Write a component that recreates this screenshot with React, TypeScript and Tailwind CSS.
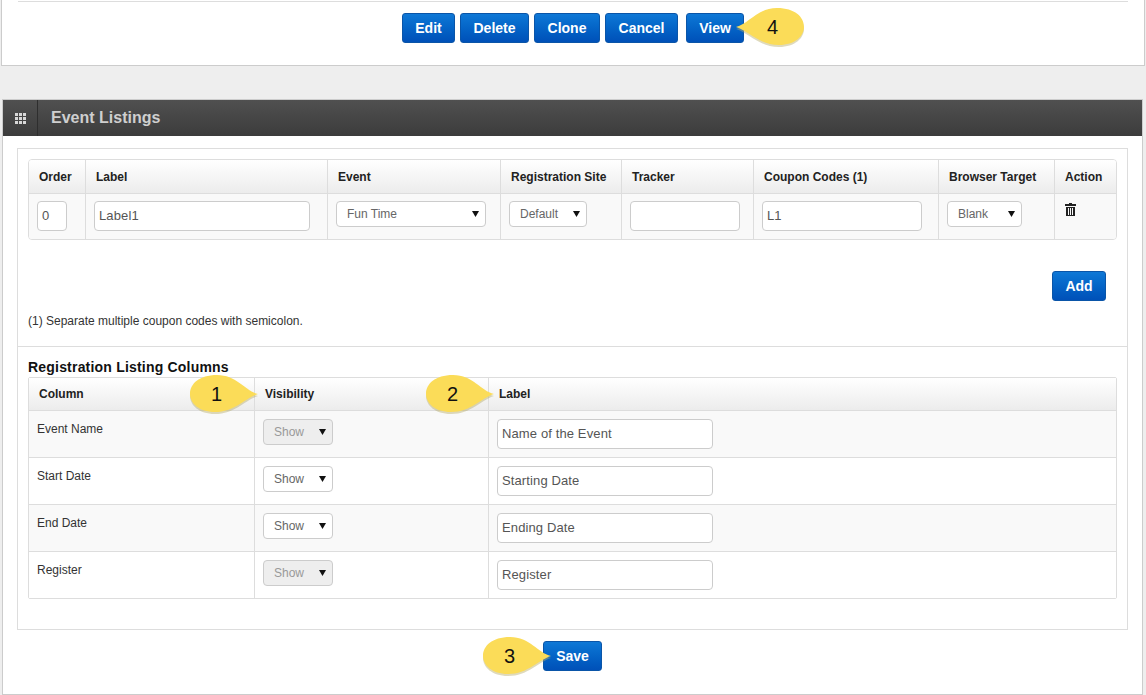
import React from 'react';

const btn =
  'h-[30px] rounded-[3px] border border-[#0a55a8] bg-gradient-to-b from-[#0f78d6] to-[#0050b8] text-[14px] font-bold text-white flex items-center justify-center';

const inputCls =
  'h-[30px] rounded-[4px] border border-[#cccccc] bg-white px-[4px] pb-[2px] text-[13px] tracking-[0.12px] text-[#555555] outline-none';

const thCls =
  'border-l border-[#dddddd] first:border-l-0 bg-gradient-to-b from-white to-[#ececec] px-[10px] text-left font-bold text-[#222222]';

function Select({ value, width, disabled }: { value: string; width: number; disabled?: boolean }) {
  return (
    <div className="relative" style={{ width }}>
      <select
        disabled={disabled}
        defaultValue={value}
        className={`h-[26px] w-full appearance-none rounded-[4px] border border-[#cccccc] pl-[10px] text-[12px] outline-none ${
          disabled ? 'bg-[#eeeeee] text-[#999999]' : 'bg-white text-[#666666]'
        }`}
      >
        <option>{value}</option>
      </select>
      <svg className="pointer-events-none absolute right-[7px] top-[10px]" width="7" height="6" viewBox="0 0 7 6">
        <path d="M0 0h7L3.5 6z" fill="#111111" />
      </svg>
    </div>
  );
}

const bubble = 'M69 20 C56 17 48 1 28 1 C10 1 1 10 1 20 C1 29 10 38 26 38 C46 38 56 24 69 20 Z';

// yellow numbered bubble, tip points left or right
function Callout({ n, dir, className }: { n: number; dir: 'left' | 'right'; className: string }) {
  return (
    <div className={`absolute z-10 h-[41px] w-[70px] ${className}`}>
      <svg width="70" height="41" viewBox="0 0 70 41" className={dir === 'left' ? '-scale-x-100' : ''}>
        <path d={bubble} fill="#b9ad6a" opacity="0.45" transform="translate(0 2)" />
        <path d={bubble} fill="#fbdc58" />
      </svg>
      <span
        className={`absolute top-[7px] text-[20px] leading-[26px] text-[#111111] ${
          dir === 'left' ? 'right-[27px]' : 'left-[22px]'
        }`}
      >
        {n}
      </span>
    </div>
  );
}

const columns = [
  { name: 'Event Name', label: 'Name of the Event', disabled: true },
  { name: 'Start Date', label: 'Starting Date', disabled: false },
  { name: 'End Date', label: 'Ending Date', disabled: false },
  { name: 'Register', label: 'Register', disabled: true },
];

export default function App() {
  return (
    <div className="relative h-[695px] w-[1146px] overflow-hidden bg-[#eeeeee] font-['Liberation_Sans',Arial,sans-serif]">
      {/* Top panel */}
      <div className="mx-[1px] h-[66px] border border-t-0 border-[#cccccc] bg-white">
        <div className="mx-[16px] h-[2px] border-b border-[#dddddd]" />
        <div className="relative mt-[11px] flex pl-[400px]">
          <button className={`${btn} w-[53px]`}>Edit</button>
          <button className={`${btn} ml-[5px] w-[69px]`}>Delete</button>
          <button className={`${btn} ml-[5px] w-[66px]`}>Clone</button>
          <button className={`${btn} ml-[5px] w-[73px]`}>Cancel</button>
          <button className={`${btn} ml-[8px] w-[58px]`}>View</button>
          <Callout n={4} dir="left" className="left-[733px] top-[-6px]" />
        </div>
      </div>

      {/* Event Listings panel */}
      <div className="ml-[2px] mr-[3px] mt-[33px] h-[596px] border border-[#cccccc] bg-white">
        <div className="flex h-[36px] items-center bg-gradient-to-b from-[#505050] to-[#3c3c3c]">
          <div className="flex h-full w-[35px] items-center justify-center border-r border-[#2e2e2e]">
            <svg width="11" height="11" viewBox="0 0 11 11" fill="#d8d8d8">
              <rect x="0" y="0" width="3" height="3" />
              <rect x="4" y="0" width="3" height="3" />
              <rect x="8" y="0" width="3" height="3" />
              <rect x="0" y="4" width="3" height="3" />
              <rect x="4" y="4" width="3" height="3" />
              <rect x="8" y="4" width="3" height="3" />
              <rect x="0" y="8" width="3" height="3" />
              <rect x="4" y="8" width="3" height="3" />
              <rect x="8" y="8" width="3" height="3" />
            </svg>
          </div>
          <h2 className="ml-[13px] text-[16px] font-bold text-[#cfcfcf]">Event Listings</h2>
        </div>

        <div className="mx-[14px] mt-[12px] h-[482px] border border-[#dddddd] bg-white">
          {/* Listings table */}
          <div className="px-[10px] pt-[10px]">
            <table className="w-[1089px] table-fixed border-separate border-spacing-0 overflow-hidden rounded-[4px] border border-[#dddddd] text-[12px]">
              <colgroup>
                <col className="w-[56px]" />
                <col className="w-[242px]" />
                <col className="w-[173px]" />
                <col className="w-[121px]" />
                <col className="w-[132px]" />
                <col className="w-[185px]" />
                <col className="w-[116px]" />
                <col />
              </colgroup>
              <thead>
                <tr className="h-[33px]">
                  <th className={thCls}>Order</th>
                  <th className={thCls}>Label</th>
                  <th className={thCls}>Event</th>
                  <th className={thCls}>Registration Site</th>
                  <th className={thCls}>Tracker</th>
                  <th className={thCls}>Coupon Codes (1)</th>
                  <th className={thCls}>Browser Target</th>
                  <th className={thCls}>Action</th>
                </tr>
              </thead>
              <tbody>
                <tr className="h-[46px] bg-[#f9f9f9] align-top">
                  <td className="border-t border-[#dddddd] pl-[8px] pt-[7px]">
                    <input defaultValue="0" className={`${inputCls} w-[30px]`} />
                  </td>
                  <td className="border-l border-t border-[#dddddd] pl-[8px] pt-[7px]">
                    <input defaultValue="Label1" className={`${inputCls} w-[216px]`} />
                  </td>
                  <td className="border-l border-t border-[#dddddd] pl-[8px] pt-[7px]">
                    <Select value="Fun Time" width={150} />
                  </td>
                  <td className="border-l border-t border-[#dddddd] pl-[8px] pt-[7px]">
                    <Select value="Default" width={78} />
                  </td>
                  <td className="border-l border-t border-[#dddddd] pl-[8px] pt-[7px]">
                    <input className={`${inputCls} w-[110px]`} />
                  </td>
                  <td className="border-l border-t border-[#dddddd] pl-[8px] pt-[7px]">
                    <input defaultValue="L1" className={`${inputCls} w-[160px]`} />
                  </td>
                  <td className="border-l border-t border-[#dddddd] pl-[8px] pt-[7px]">
                    <Select value="Blank" width={75} />
                  </td>
                  <td className="border-l border-t border-[#dddddd] pl-[10px] pt-[9px]">
                    <svg width="11" height="13" viewBox="0 0 11 13" fill="#222222">
                      <path d="M4 0h3v1h4v2H0V1h4z" />
                      <path d="M1 4h9v9H1zM3 5v7h1V5zM5 5v7h1V5zM7 5v7h1V5z" fillRule="evenodd" />
                    </svg>
                  </td>
                </tr>
              </tbody>
            </table>
          </div>

          <div className="mt-[31px] flex justify-end pr-[21px]">
            <button className={`${btn} w-[54px]`}>Add</button>
          </div>
          <p className="ml-[10px] mt-[13px] text-[12px] leading-[14px] text-[#333333]">
            (1) Separate multiple coupon codes with semicolon.
          </p>

          <div className="mt-[18px] border-t border-[#dddddd] px-[10px] pt-[12px]">
            <h3 className="text-[14px] font-bold leading-[16px] tracking-[0.2px] text-[#111111]">
              Registration Listing Columns
            </h3>
            <table className="mt-[2px] w-[1089px] table-fixed border-separate border-spacing-0 rounded-[2px] border border-[#dddddd] text-[12px]">
              <colgroup>
                <col className="w-[225px]" />
                <col className="w-[234px]" />
                <col />
              </colgroup>
              <thead>
                <tr className="h-[32px]">
                  <th className={thCls}>Column</th>
                  <th className={thCls}>Visibility</th>
                  <th className={thCls}>Label</th>
                </tr>
              </thead>
              <tbody>
                {columns.map((c, i) => (
                  <tr key={c.name} className={`h-[47px] align-top ${i % 2 === 0 ? 'bg-[#f9f9f9]' : 'bg-white'}`}>
                    <td className="border-t border-[#dddddd] pl-[8px] pt-[9px] text-[#333333]">{c.name}</td>
                    <td className="border-l border-t border-[#dddddd] pl-[8px] pt-[8px]">
                      <Select value="Show" width={70} disabled={c.disabled} />
                    </td>
                    <td className="border-l border-t border-[#dddddd] pl-[8px] pt-[8px]">
                      <input defaultValue={c.label} className={`${inputCls} w-[216px]`} />
                    </td>
                  </tr>
                ))}
              </tbody>
            </table>
          </div>
        </div>

        <div className="mt-[11px] flex justify-center">
          <button className={`${btn} w-[59px]`}>Save</button>
        </div>
      </div>

      <Callout n={1} dir="right" className="left-[189px] top-[374px]" />
      <Callout n={2} dir="right" className="left-[425px] top-[374px]" />
      <Callout n={3} dir="right" className="left-[482px] top-[636px]" />
    </div>
  );
}
